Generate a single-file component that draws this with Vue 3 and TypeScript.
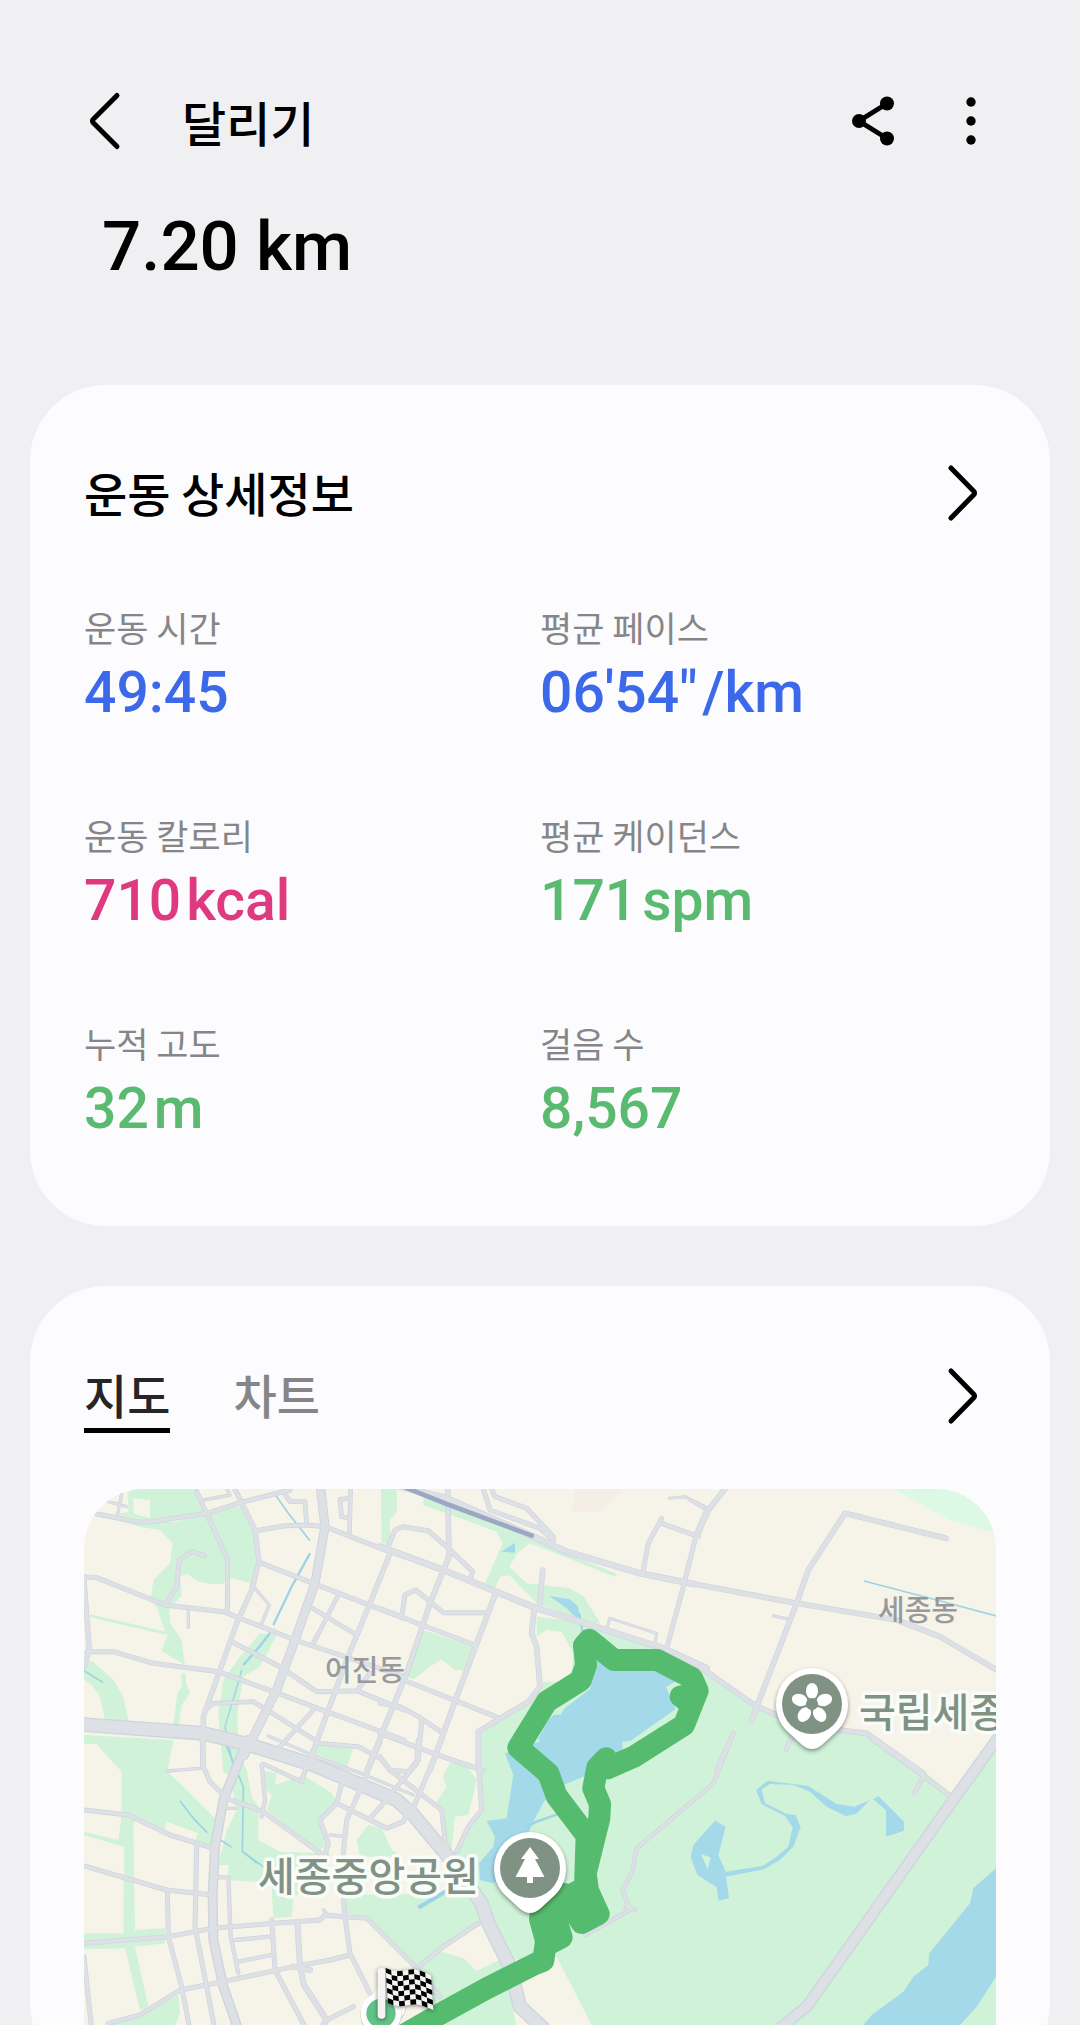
<script setup lang="ts">
import { ref } from 'vue'

interface Metric {
  label: string
  value: string
  unit?: string
  tone: 'blue' | 'pink' | 'green'
}

interface Road {
  w: number
  d: string
}

interface Tile {
  x: number
  y: number
  parks: string[]
  waters: string[]
  streams: Road[]
  roads: Road[]
}

const metrics: Metric[] = [
  { label: '운동 시간', value: '49:45', tone: 'blue' },
  { label: '평균 페이스', value: '06\'54"', unit: '/km', tone: 'blue' },
  { label: '운동 칼로리', value: '710', unit: 'kcal', tone: 'pink' },
  { label: '평균 케이던스', value: '171', unit: 'spm', tone: 'green' },
  { label: '누적 고도', value: '32', unit: 'm', tone: 'green' },
  { label: '걸음 수', value: '8,567', tone: 'green' },
]

const tabs = ['지도', '차트']
const activeTab = ref('지도')

// Map geometry, drawn at three units per pixel; every tile has its own origin.
const tiles: Tile[] = [
  {
    x: -12,
    y: -27,
    parks: [
      'M165 27H350L380 100L210 122L100 102L145 96V35ZM160 55V100L210 115V60Z',
      'M50 105L185 128L290 125L375 100L485 78L520 150L535 240L515 310L440 290L430 312L390 312L350 303L325 283L300 287L305 345L268 390L270 430L305 480L315 555L245 512L262 465L250 440L232 385L213 355L220 300L270 250L278 190L240 150L185 142Z',
      'M30 403L258 455V465L30 411Z',
      'M305 580H318V610L330 640L305 675L297 735H280L292 640L305 620Z',
      'M12 540L40 545L100 600L130 650L145 720H75L60 650L35 615L12 600Z',
      'M540 460L590 465L540 560L490 590L472 700L475 880H430L415 700L430 600L480 530Z',
      'M715 790L822 798L800 862L705 820Z',
      'M903 27H950V95L930 120V190H905Z',
    ],
    waters: [],
    streams: [
      { w: 5, d: 'M583 40L625 100L690 182' },
      { w: 7, d: 'M690 220L635 320L580 435' },
      { w: 7, d: 'M575 452L540 498L490 555' },
      { w: 4, d: 'M485 570L468 630L435 740L462 870' },
      { w: 5, d: 'M12 572L70 608' },
    ],
    roads: [
      { w: 8, d: 'M525 325L568 375L545 430M325 395V442M565 768L710 830L810 870M370 60L450 45L440 27M85 65L140 80M125 40L112 108' },
      { w: 13, d: 'M50 102L180 126L215 125L380 100L480 68L630 30M350 35L380 100L443 240L442 400M12 290L50 293L255 375L430 395L645 480L972 590M255 375L290 320L298 240L335 215L372 227' },
      { w: 13, d: 'M525 153L610 138L680 135L735 140L910 208L972 230M540 248L700 310L972 415M455 485L600 560L710 635L830 632L972 690M830 632L870 580M20 515L100 515L220 550L415 575L580 635L740 695L972 780' },
      { w: 14, d: 'M465 27L525 150L537 245L515 330L470 430L420 570L370 710L368 860M930 220L870 370L800 540L690 840M12 300L28 510L12 560' },
      { w: 12, d: 'M375 690L400 670L520 665L570 695L720 790L835 800L900 835L930 870M972 600L860 870M610 35L630 65L675 65L680 135M812 27L808 165M810 55L780 58L785 110L800 112M775 345L700 490M690 380L830 465M700 690L600 800' },
    ],
  },
  {
    x: 888,
    y: -27,
    parks: [
      'M130 50L250 85L460 180L712 282L705 290L450 190L415 215L388 260L440 310L570 325L612 350L662 432L560 405L470 370L388 286L360 290L345 325L315 310L368 190L350 155L130 75Z',
      'M130 450L280 500L250 570L225 570L185 538L150 560L100 598L75 588Z',
    ],
    waters: ['M365 215L405 188V218Z', 'M508 348L570 358L595 380L600 425L560 385Z'],
    streams: [{ w: 6, d: 'M598 400L608 460' }],
    roads: [
      { w: 7, d: 'M680 445L690 415L830 460L825 490M868 55L915 50L975 80' },
      { w: 13, d: 'M0 385L125 435L285 495M20 210L45 150L70 140L145 152L205 205L278 275L270 300M65 410L75 345L108 330L190 398L325 398M70 600L360 715M0 670L60 680L115 710L190 760M125 720L115 840L85 875L30 870L0 830M0 760L160 820L310 872' },
      { w: 15, d: 'M203 27L207 230L150 370L80 580L0 775M345 345L230 650L150 870M488 270L478 385M463 385L455 460L470 500L480 620L445 665L295 755V870' },
      { w: 13, d: 'M310 27L330 90L480 145L520 180M335 27L345 50L440 85L520 170L515 195M788 280L805 190L845 115M845 130L955 170M980 90L950 160L910 320L860 505' },
      { w: 18, d: 'M0 200L190 270L470 385L600 425L850 505L980 565' },
      { w: 18, d: 'M20 10L200 55L460 170L560 215L780 280L940 312' },
    ],
  },
  {
    x: 1818,
    y: -27,
    parks: [],
    waters: [],
    streams: [{ w: 5, d: 'M522 303L740 360L920 408' }],
    roads: [
      { w: 8, d: 'M0 60L50 90M250 408L290 417' },
      { w: 12, d: 'M308 765L288 808M130 760L80 870' },
      { w: 15, d: 'M105 27L55 90L20 170M0 310L320 370L620 420L750 470L920 570M768 175L465 100L355 270L320 370L200 680L185 722' },
      { w: 15, d: 'M0 540L200 680L270 708L450 750L530 760L700 880' },
    ],
  },
  {
    x: -12,
    y: 753,
    parks: [
      'M12 -15L280 0L262 95L300 130L410 240L390 320L340 310L355 280L260 245L255 270L170 230L160 260L165 570L255 565V610L165 620L205 800L180 810L135 625L12 628V580L130 580L132 320L12 285V275L115 300L125 230V95L50 12H12Z',
      'M430 20H470L500 90L515 170L535 200V300L600 335L750 340V420L640 470L635 530L580 535L575 430L445 420V375H415L440 270L470 210L440 60Z',
      'M548 92L590 100L585 135L670 105L755 160L770 185L720 240L745 310L715 335L560 210L575 165L555 145Z',
      'M865 255L905 265L935 330L970 350H840L830 300Z',
      'M1110 68L1160 75L1190 120L1165 225L1125 230L1115 330L1095 320V220L1070 185L1100 140L1088 110Z',
      'M790 465L1195 460L1215 530L1185 555L1010 685L860 535L800 520Z',
      'M1040 660L1085 635L1150 655L1190 692L1270 655L1310 860H1100L1010 700Z',
      'M85 850L180 825L295 765L300 820L280 870H85Z',
    ],
    waters: [],
    streams: [
      { w: 5, d: 'M440 20L490 140L487 335L550 380' },
      { w: 5, d: 'M300 183L340 235L382 278M405 288L455 322M490 335L530 370' },
      { w: 12, d: 'M1015 503L1130 435' },
    ],
    roads: [
      { w: 8, d: 'M262 93L360 85M750 285L795 290M700 50L830 95L1000 165M730 510L750 530M440 205H468' },
      { w: 11, d: 'M545 75L555 180L545 230M550 72L665 125M410 412H445L452 590L475 700M465 600L570 590M475 665L575 645' },
      { w: 13, d: 'M12 210L145 225L270 285L400 325M12 378L260 450L395 465M262 450L265 590L305 740L330 870M350 320L345 560L380 740L405 870M12 610L265 590L400 565L580 550L650 545L720 540L735 525L790 530L860 535L1010 685L1080 770' },
      { w: 13, d: 'M366 -10L370 80L390 125L440 175L550 215L735 350M85 850L180 825L300 750L430 725L640 680L750 660L810 645M12 650L35 870M575 540L585 690L680 870M740 840L820 800' },
      { w: 16, d: 'M652 545L660 680L672 735L740 840L720 870M640 680L690 690' },
      { w: 13, d: 'M790 480L795 530L810 640L870 760M785 130L770 190L720 240L745 310L735 345M770 190L920 265L970 245L985 210M840 150L800 240L790 340M870 235L915 185M665 125L685 60' },
      { w: 13, d: 'M930 165L1010 70L1015 0M1000 205L1085 0M930 90L1085 210L1095 300L1110 345M900 5L850 125M1195 60L1205 210L1165 260L1130 335M1195 550L1090 620L1010 685' },
      { w: 26, d: 'M502 0L490 30L430 180L405 320L398 460L400 600L430 740L475 870' },
      { w: 40, d: 'M0 -47L370 -20L500 12L700 75L950 180L1000 225L1100 345L1205 490L1225 550L1290 680L1320 800L1390 865' },
    ],
  },
  {
    x: 1308,
    y: 753,
    parks: [],
    waters: [
      'M1428 385V710L1370 800L1320 855V1000H900L1030 855L1055 825L1150 755L1180 710L1225 675L1228 640L1350 490L1360 445Z',
      'M585 242L617 260L595 345L617 395L727 378L770 350L805 320L818 262L795 228L725 192L708 150L743 122L865 138L950 192L1003 200L1050 180L1008 222L978 228L920 200L870 155L820 135L750 132L725 148L735 190L800 222L827 225L842 262L820 320L780 360L732 388L618 410L627 475L595 482L590 442L532 405L512 350L520 315ZM543 343L563 388L572 352Z',
      'M1060 178L1075 168L1152 245V272L1098 290V210Z',
    ],
    streams: [{ w: 7, d: 'M20 260L50 245L120 220' }],
    roads: [
      { w: 11, d: 'M640 -20L580 130L350 325L335 400L308 450L330 510L195 585M318 502L345 508' },
      { w: 12, d: 'M1060 0L1210 108L1300 175M1210 110L1182 160' },
      { w: 32, d: 'M1450 -28L1300 180L860 800L760 880' },
    ],
  },
]

const majorAvenue = 'M710 0L723 113L693 283L633 453L578 603L518 723L480 800'
const eastPark =
  'M1188 733L1368 613L1373 578H1428L1463 548L1468 493L1433 428L1388 423L1358 443V383L1488 398L1738 483L1848 533L2018 653L2078 683L2268 723L2348 733L2508 838L2613 920L2736 760V1900H1640L1523 1608L1418 1403L1278 1413L1198 1293L1108 1093L1188 963Z'
const lake =
  'M1536 501L1578 541L1713 545L1778 576L1746 593L1756 618L1775 660L1640 755L1615 758L1616 781L1498 863L1438 888L1383 933L1353 988L1320 1060L1300 1120L1228 1183L1188 1173L1185 1123L1228 1073L1233 1043L1208 996L1268 988L1288 858L1263 793L1368 757L1363 748L1395 690L1410 678L1432 676L1440 660L1518 600Z'
const route =
  'M968 1633L1063 1578L1208 1498L1353 1425L1378 1415L1386 1355L1368 1290L1372 1265L1503 1195L1508 1040L1418 921L1393 853L1303 776L1388 638L1490 574L1506 528L1500 470L1516 452L1590 513H1720L1824 567L1841 605L1800 708L1650 803L1570 838L1566 808L1540 835L1528 898L1548 945L1546 988L1505 1153L1512 1205L1544 1275L1493 1302L1440 1215L1400 1240L1433 1345L1386 1370M1790 622L1812 640'

// Checkered finish flag: 8 x 7 cells on a gently waving cloth.
const flagPoint = (i: number, j: number): string => {
  const x = 905 + 17 * i + j
  const y = 1437 + 15 * j + 2 * i + 6 * Math.sin(i * 0.9)
  return `${x.toFixed(1)} ${y.toFixed(1)}`
}
const flagCells: { d: string; dark: boolean }[] = []
for (let i = 0; i < 8; i++) {
  for (let j = 0; j < 7; j++) {
    flagCells.push({
      d: `M${flagPoint(i, j)}L${flagPoint(i + 1, j)}L${flagPoint(i + 1, j + 1)}L${flagPoint(i, j + 1)}Z`,
      dark: (i + j) % 2 === 0,
    })
  }
}

const petals = [0, 72, 144, 216, 288]
const pinShape = 'M-36 0A36 36 0 1 1 36 0C36 11 32 20 25 27L11 40Q0 50 -11 40L-25 27C-32 20 -36 11 -36 0Z'
</script>

<template>
  <div class="screen">
    <header class="top-bar">
      <button class="icon-button" type="button" aria-label="뒤로">
        <svg viewBox="0 0 64 64" class="icon line">
          <path d="M45 6.500L21 30.500Q20 32 21 33.500L45 57.500" />
        </svg>
      </button>
      <h1 class="title">달리기</h1>
      <div class="actions">
        <button class="icon-button" type="button" aria-label="공유">
          <svg viewBox="0 0 64 64" class="icon">
            <path class="share-line" d="M46 14.500L18 32L46 49.500" />
            <circle cx="46" cy="14.500" r="7" />
            <circle cx="18" cy="32" r="7" />
            <circle cx="46" cy="49.500" r="7" />
          </svg>
        </button>
        <button class="icon-button" type="button" aria-label="더보기">
          <svg viewBox="0 0 64 64" class="icon">
            <circle cx="32" cy="13" r="4.700" />
            <circle cx="32" cy="32" r="4.700" />
            <circle cx="32" cy="51" r="4.700" />
          </svg>
        </button>
      </div>
    </header>

    <p class="distance">7.20 km</p>

    <main class="cards">
      <section class="card">
        <div class="card-head">
          <h2 class="card-title">운동 상세정보</h2>
          <button class="icon-button" type="button" aria-label="운동 상세정보 열기">
            <svg viewBox="0 0 64 64" class="icon line">
              <path d="M19 7L42 30.500Q43 32 42 33.500L19 57" />
            </svg>
          </button>
        </div>
        <dl class="metrics">
          <div v-for="m in metrics" :key="m.label" class="metric">
            <dt class="metric-label">{{ m.label }}</dt>
            <dd class="metric-value" :class="m.tone">
              <span>{{ m.value }}</span><span v-if="m.unit">{{ m.unit }}</span>
            </dd>
          </div>
        </dl>
      </section>

      <section class="card map-card">
        <div class="card-head">
          <div class="tabs" role="tablist">
            <button
              v-for="tab in tabs"
              :key="tab"
              type="button"
              role="tab"
              class="tab"
              :class="{ active: tab === activeTab }"
              :aria-selected="tab === activeTab"
              @click="activeTab = tab"
            >
              {{ tab }}
            </button>
          </div>
          <button class="icon-button" type="button" aria-label="지도 열기">
            <svg viewBox="0 0 64 64" class="icon line">
              <path d="M19 9L42 32.500Q43 34 42 35.500L19 59" />
            </svg>
          </button>
        </div>

        <svg class="map" viewBox="0 0 912 546" role="img" aria-label="달리기 경로 지도">
          <g transform="scale(0.33333)">
            <path class="blush" d="M1471 0H1618L1548 68H1463Z" />
            <path class="mint" d="M2428 0H2736V133L2598 93Z" />
            <path class="park" :d="eastPark" />
            <g v-for="(t, i) in tiles" :key="`p${i}`" :transform="`translate(${t.x} ${t.y})`">
              <path v-for="d in t.parks" :key="d" class="park" fill-rule="evenodd" :d="d" />
            </g>
            <path class="water" :d="lake" />
            <g v-for="(t, i) in tiles" :key="`w${i}`" :transform="`translate(${t.x} ${t.y})`">
              <path v-for="d in t.waters" :key="d" class="water" fill-rule="evenodd" :d="d" />
              <path v-for="s in t.streams" :key="s.d" class="stream" :stroke-width="s.w" :d="s.d" />
            </g>
            <path class="casing" stroke-width="28" :d="majorAvenue" />
            <g v-for="(t, i) in tiles" :key="`c${i}`" :transform="`translate(${t.x} ${t.y})`">
              <path v-for="r in t.roads" :key="r.d" class="casing" :stroke-width="r.w > 20 ? r.w + 4 : r.w + 2" :d="r.d" />
            </g>
            <path class="road" stroke-width="22" :d="majorAvenue" />
            <g v-for="(t, i) in tiles" :key="`r${i}`" :transform="`translate(${t.x} ${t.y})`">
              <path v-for="r in t.roads" :key="r.d" class="road" :stroke-width="r.w > 20 ? r.w - 4 : r.w - 2" :d="r.d" />
            </g>
            <path class="rail" d="M963 -5L1088 45L1343 140" />
            <path class="route" :d="route" />
          </g>

          <text class="district" x="241" y="192">어진동</text>
          <text class="district" x="794" y="132">세종동</text>
          <text class="place" x="174" y="402">세종중앙공원</text>
          <text class="place" x="775" y="238">국립세종</text>

          <g transform="translate(728 215)">
            <path class="pin" :d="pinShape" />
            <circle class="pin-disc" r="30" />
            <ellipse v-for="a in petals" :key="a" class="glyph" cx="0" cy="-13" rx="6" ry="8" :transform="`rotate(${a})`" />
            <circle class="pin-disc" r="6" />
          </g>
          <g transform="translate(446 379)">
            <path class="pin" :d="pinShape" />
            <circle class="pin-disc" r="30" />
            <path class="glyph" d="M0 -21L9 -9H5L14.500 9H3V15H-3V9H-14.500L-5 -9H-9Z" />
          </g>

          <g transform="scale(0.33333)">
            <circle class="pin" cx="910" cy="1548" r="56" />
            <circle class="pin" cx="891" cy="1573" r="62" />
            <circle class="start-disc" cx="891" cy="1573" r="44" />
            <g class="flag">
              <path v-for="c in flagCells" :key="c.d" :class="c.dark ? 'dark' : 'light'" :d="c.d" />
              <rect class="pole" x="881" y="1437" width="23" height="152" rx="10" />
            </g>
          </g>
        </svg>
      </section>
    </main>
  </div>
</template>

<style>
body {
  margin: 0;
  background: #f0f0f2;
}
</style>

<style scoped>
.screen {
  box-sizing: border-box;
  height: 100vh;
  overflow-y: auto;
  scrollbar-width: none;
  padding-top: 89px;
  background: #f0f0f2;
  color: #000;
  font-family: "Noto Sans CJK KR", "Noto Sans", sans-serif;
}

.top-bar {
  display: flex;
  align-items: center;
  padding: 0 77px 0 72px;
}

.title {
  margin: 0 0 0 46px;
  font-size: 48px;
  font-weight: 500;
  line-height: 64px;
}

.actions {
  display: flex;
  gap: 34px;
  margin-left: auto;
}

.icon-button {
  width: 64px;
  height: 64px;
  padding: 0;
  border: 0;
  background: none;
  color: inherit;
}

.icon {
  display: block;
  width: 64px;
  height: 64px;
  fill: currentColor;
}

.line {
  fill: none;
  stroke: currentColor;
  stroke-width: 5;
  stroke-linecap: round;
  stroke-linejoin: round;
}

.share-line {
  fill: none;
  stroke: currentColor;
  stroke-width: 5;
}

.distance {
  margin: 54px 102px 98px;
  font-family: Roboto, sans-serif;
  font-size: 69px;
  font-weight: 500;
  line-height: 80px;
}

.cards {
  display: flex;
  flex-direction: column;
  gap: 60px;
  padding: 0 30px;
}

.card {
  padding: 76px 54px 84px;
  border-radius: 76px;
  background: #fcfcfe;
}

.map-card {
  padding-bottom: 44px;
}

.card-head {
  display: flex;
  align-items: flex-start;
  justify-content: space-between;
}

.card-title {
  margin: 0;
  font-size: 47px;
  font-weight: 500;
  line-height: 62px;
}

.metrics {
  display: grid;
  grid-template-columns: 1fr 1fr;
  row-gap: 87px;
  margin: 80px 0 0;
}

.metric-label {
  margin-bottom: 11px;
  color: #868688;
  font-size: 35px;
  line-height: 44px;
}

.metric-value {
  display: flex;
  gap: 5px;
  margin: 0;
  font-family: Roboto, sans-serif;
  font-size: 57px;
  font-weight: 500;
  line-height: 66px;
}

.blue {
  color: #3c69ea;
}

.pink {
  color: #df3a80;
}

.green {
  color: #5aba70;
}

.tabs {
  display: flex;
  gap: 63px;
}

.tab {
  padding: 0 0 2px;
  border: 0;
  border-bottom: 5px solid transparent;
  background: none;
  color: #868688;
  font-family: inherit;
  font-size: 47px;
  font-weight: 500;
  line-height: 64px;
}

.tab.active {
  border-color: #000;
  color: #252528;
}

.map {
  display: block;
  width: 100%;
  margin-top: 56px;
  border-radius: 60px 60px 0 0;
  background: #f6f4e9;
}

.map path {
  stroke-linejoin: round;
}

.park {
  fill: #cff2d9;
}

.mint {
  fill: #dcf9e6;
}

.blush {
  fill: #f5eee6;
}

.water {
  fill: #a4d9ea;
}

.stream {
  fill: none;
  stroke: #9cd3e6;
}

.casing,
.road {
  fill: none;
  stroke-linecap: round;
}

.casing {
  stroke: #cfd4dd;
}

.road {
  stroke: #dde1e6;
}

.rail {
  fill: none;
  stroke: #9ba8c4;
  stroke-width: 14;
  stroke-linecap: round;
}

.route {
  fill: none;
  stroke: #55bb6e;
  stroke-width: 66;
  stroke-linecap: round;
}

.district {
  fill: #98999b;
  font-size: 29px;
  font-weight: 500;
}

.place {
  fill: #7f9284;
  stroke: #f9fcf8;
  stroke-width: 7px;
  stroke-linejoin: round;
  paint-order: stroke;
  font-size: 40px;
  font-weight: 500;
}

.pin {
  fill: #fff;
  filter: drop-shadow(0 2px 2px rgba(0, 0, 0, 0.4));
}

.pin-disc {
  fill: #7f9284;
}

.glyph {
  fill: #fff;
}

.start-disc {
  fill: #62c288;
}

.flag {
  filter: drop-shadow(0 3px 6px rgba(0, 0, 0, 0.5));
}

.dark {
  fill: #000;
}

.light,
.pole {
  fill: #f4f4f4;
}
</style>
